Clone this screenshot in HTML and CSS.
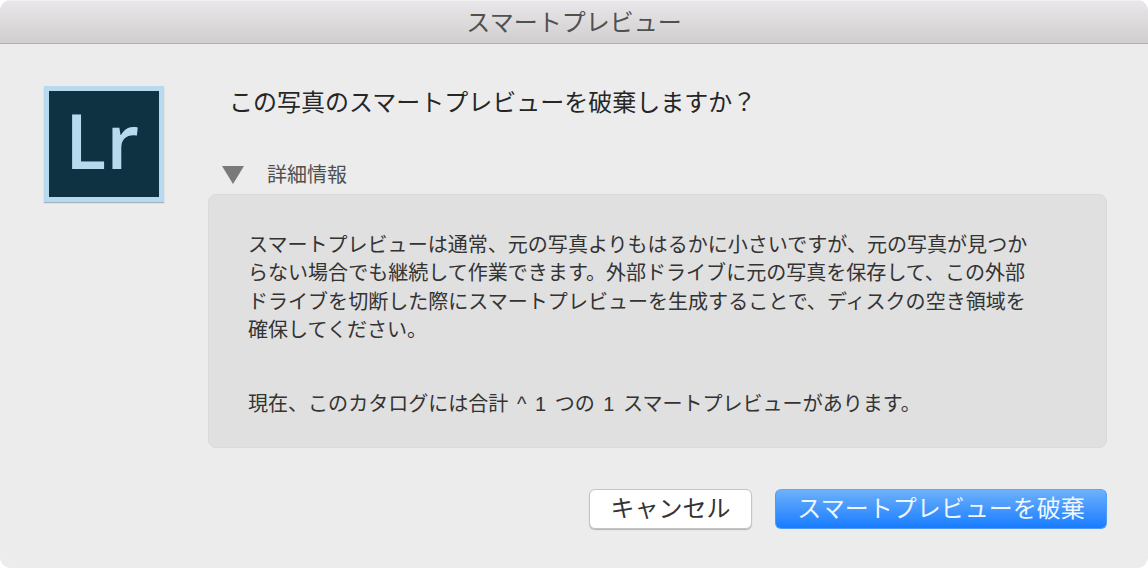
FILE: index.html
```html
<!DOCTYPE html>
<html lang="ja">
<head>
<meta charset="utf-8">
<title>スマートプレビュー</title>
<link rel="stylesheet" href="styles.css">
</head>
<body>
<div class="window">
  <header class="titlebar">スマートプレビュー</header>
  <main class="content">
    <div class="logo"><span class="logo-text">Lr</span></div>
    <div class="main">
      <h1 class="question">この写真のスマートプレビューを破棄しますか？</h1>
      <div class="disclosure">
        <svg class="triangle" width="22" height="18" viewBox="0 0 22 18"><path d="M0 0H22L11 18Z" fill="#7a7a7a"/></svg>
        <span class="disclosure-label">詳細情報</span>
      </div>
      <section class="details">
        <p class="para">スマートプレビューは通常、元の写真よりもはるかに小さいですが、元の写真が見つか<br>らない場合でも継続して作業できます。外部ドライブに元の写真を保存して、この外部<br>ドライブを切断した際にスマートプレビューを生成することで、ディスクの空き領域を<br>確保してください。</p>
        <p class="para count">現在、このカタログには合計 ^ 1 つの 1 スマートプレビューがあります。</p>
      </section>
      <div class="actions">
        <button class="btn btn-cancel">キャンセル</button>
        <button class="btn btn-primary">スマートプレビューを破棄</button>
      </div>
    </div>
  </main>
</div>
</body>
</html>
```
FILE: styles.css
```css
* { box-sizing: border-box; }
html, body { margin: 0; padding: 0; background: #fff; }
body {
  width: 1148px;
  height: 568px;
  overflow: hidden;
  font-family: "Liberation Sans", "Noto Sans CJK JP", sans-serif;
  color: #333;
}
.window {
  width: 1148px;
  height: 568px;
  background: #ececec;
  border-radius: 11px;
  overflow: hidden;
  display: flex;
  flex-direction: column;
}
.titlebar {
  height: 44px;
  flex: none;
  background: linear-gradient(#e9e7e9, #d0cecf);
  border-bottom: 1px solid #b0aeaf;
  box-shadow: inset 0 1px 0 #f3f2f3;
  display: flex;
  align-items: center;
  justify-content: center;
  padding-bottom: 3px;
  font-size: 24px;
  color: #505050;
}
.content {
  flex: 1;
  display: flex;
  padding: 42px 41px 0 44px;
}
.logo {
  width: 120px;
  height: 116px;
  flex: none;
  background: #0f3242;
  border: 5px solid #b8daee;
  box-shadow: 0 1px 1px #9fb2bd;
  display: flex;
  align-items: center;
  justify-content: center;
}
.logo-text {
  font-family: "Open Sans", sans-serif;
  font-weight: 600;
  font-size: 76px;
  line-height: 1;
  color: #b8daee;
  letter-spacing: 0;
  position: relative;
  top: -4px;
  left: -2px;
}
.main { flex: 1; min-width: 0; margin-left: 44px; }
.question {
  margin: 0;
  padding-left: 21px;
  font-size: 24px;
  font-weight: 400;
  line-height: 34px;
  color: #262626;
}
.disclosure {
  display: flex;
  align-items: center;
  margin: 40px 0 4px;
  padding-left: 14px;
  height: 30px;
}
.triangle { flex: none; }
.disclosure-label {
  margin-left: 23px;
  font-size: 20px;
  line-height: 30px;
  color: #505050;
}
.details {
  width: 899px;
  height: 254px;
  background: #e0e0e0;
  border: 1px solid #dadada;
  border-radius: 8px;
  padding: 35.5px 40px 0 39px;
}
.para {
  margin: 0;
  font-size: 20.05px;
  line-height: 28.6px;
  color: #333;
  white-space: nowrap;
}
.count { margin-top: 45.4px; word-spacing: 3px; }
.actions {
  display: flex;
  justify-content: flex-end;
  gap: 23px;
  width: 899px;
  margin-top: 41px;
}
.btn {
  height: 40px;
  border-radius: 6px;
  font-family: inherit;
  padding: 0;
  line-height: 1;
  font-size: 24px;
}
.btn-cancel {
  width: 163px;
  background: #fff;
  border: 1px solid #c4c4c4;
  box-shadow: 0 1px 1px #b4b4b4;
  color: #333;
}
.btn-primary {
  width: 332px;
  background: linear-gradient(#6db1fb, #187cff);
  border: 1px solid #4f9bf5;
  border-top-color: #62a8f8;
  color: #eef6ff;
}
```
